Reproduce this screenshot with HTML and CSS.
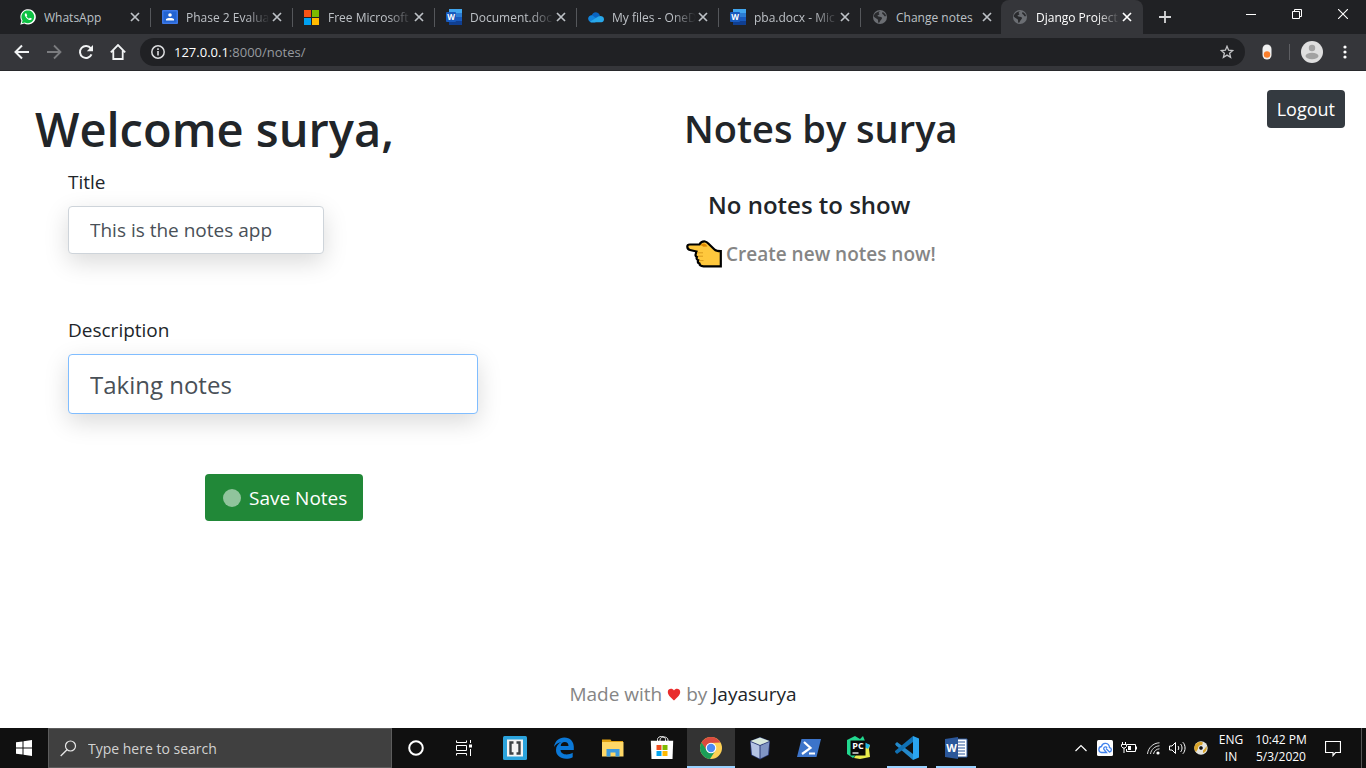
FILE: index.html
```
<!DOCTYPE html>
<html lang="en">
<head>
<meta charset="utf-8">
<title>Django Project</title>
<link rel="stylesheet" href="styles.css">
</head>
<body>
<svg class="defs" aria-hidden="true">
  <symbol id="close" viewBox="0 0 10 10"><path d="M1 1l8 8M9 1l-8 8" stroke="currentColor" stroke-width="1.7" fill="none"/></symbol>
  <symbol id="word" viewBox="0 0 16 16"><path d="M3 0h13v4H3z" fill="#41a5ee"/><path d="M3 4h13v4H3z" fill="#2b7cd3"/><path d="M3 8h13v4H3z" fill="#185abd"/><path d="M3 12h13v4H3z" fill="#103f91"/><rect y="3" width="10" height="10" rx="1" fill="#185abd"/><text x="5" y="11" text-anchor="middle" font-size="8" font-weight="700" fill="#fff">W</text></symbol>
  <symbol id="globe" viewBox="0 0 16 16"><circle cx="8" cy="8" r="7" fill="#6b6e73"/><path d="M8.500 2.500C6.500 3 6 4.200 7.500 5c-.3 1.300-2 .8-2 2 1.200 1 3.500.3 4.500 1.700.3 1.600-1.500 2-1.800 3.300L7 14c-1.300-.5-.8-2-1-3.200C5 9.500 3 9.300 1.700 7.500 2 5 4.500 2.300 8.500 2.500zM10.500 3c2 .8 3.300 2.300 3.500 4-1 .6-1.700.3-2-.6-.3-1-1.600-1-1.900-1.900z" fill="#292a2d"/></symbol>
</svg>

<header class="browser">
  <nav class="tabs">
    <div class="tab">
      <svg class="fav" viewBox="0 0 16 16"><path d="M.3 15.700l1.100-4A7.700 7.700 0 1 1 4.300 14.600z" fill="#fff"/><path d="M1.800 14.200l.8-2.700A6.400 6.400 0 1 1 4.700 13.400z" fill="#0ec143"/><path d="M5.500 4.300c-1 .8-1 2 .2 3.700 1.300 2 3.200 3.200 4.600 3.100.9-.1 1.500-.7 1.500-1.500L9.900 8.700l-.9 1C8 9.300 7 8.300 6.500 7.300l.7-.9-.8-2z" fill="#fff"/></svg>
      <a class="title" href="#">WhatsApp</a><button class="x" aria-label="Close tab"><svg><use href="#close"/></svg></button>
    </div>
    <div class="tab">
      <svg class="fav" viewBox="0 0 16 16"><rect y="1" width="16" height="14" rx="1" fill="#3d78e8"/><rect x="1.500" y="2.500" width="13" height="11" fill="#2364d2"/><circle cx="8" cy="6" r="1.800" fill="#fff"/><path d="M4 11.500V10c1-1.500 7-1.500 8 0v1.500z" fill="#fff"/></svg>
      <a class="title" href="#">Phase 2 Evalua</a><button class="x" aria-label="Close tab"><svg><use href="#close"/></svg></button>
    </div>
    <div class="tab">
      <svg class="fav" viewBox="0 0 16 16"><path d="M0 1h7v7H0z" fill="#f65314"/><path d="M8 1h7v7H8z" fill="#7cbb00"/><path d="M0 9h7v7H0z" fill="#00a1f1"/><path d="M8 9h7v7H8z" fill="#ffbb00"/></svg>
      <a class="title" href="#">Free Microsoft</a><button class="x" aria-label="Close tab"><svg><use href="#close"/></svg></button>
    </div>
    <div class="tab">
      <svg class="fav"><use href="#word"/></svg>
      <a class="title" href="#">Document.doc</a><button class="x" aria-label="Close tab"><svg><use href="#close"/></svg></button>
    </div>
    <div class="tab">
      <svg class="fav" viewBox="0 0 16 16"><path d="M3.500 7C4.500 3 9.500 1.500 12 6.500l-5 5z" fill="#0a64c0"/><path d="M1 12C-1 9 1 6 4 6.200L11 11l-4 2.500H3z" fill="#1284dc"/><path d="M2 12.700L9 8.200c3-2.200 7-1 7 2 0 2-1.200 3-2.500 3.100H4c-.8 0-1.500-.2-2-.600z" fill="#28a8ea"/></svg>
      <a class="title" href="#">My files - OneD</a><button class="x" aria-label="Close tab"><svg><use href="#close"/></svg></button>
    </div>
    <div class="tab">
      <svg class="fav"><use href="#word"/></svg>
      <a class="title" href="#">pba.docx - Mic</a><button class="x" aria-label="Close tab"><svg><use href="#close"/></svg></button>
    </div>
    <div class="tab last">
      <svg class="fav"><use href="#globe"/></svg>
      <a class="title plain" href="#">Change notes</a><button class="x" aria-label="Close tab"><svg><use href="#close"/></svg></button>
    </div>
    <div class="tab active">
      <svg class="fav"><use href="#globe"/></svg>
      <a class="title" href="#">Django Project</a><button class="x" aria-label="Close tab"><svg><use href="#close"/></svg></button>
    </div>
    <button class="new" aria-label="New tab"><svg width="12" height="12" viewBox="0 0 12 12"><path d="M6 0v12M0 6h12" stroke="#d5d6d8" stroke-width="1.800"/></svg></button>
    <div class="window">
      <button aria-label="Minimise"><svg width="10" height="10" viewBox="0 0 10 10"><path d="M0 5.500h10" stroke="#fff"/></svg></button>
      <button aria-label="Restore"><svg width="10" height="10" viewBox="0 0 10 10"><path d="M.5 2.500h7v7h-7zM2.500 2.500v-2h7v7h-2" stroke="#fff" fill="none"/></svg></button>
      <button aria-label="Close"><svg width="10" height="10" viewBox="0 0 10 10"><path d="M0 0l10 10M10 0L0 10" stroke="#fff" stroke-width="1.100"/></svg></button>
    </div>
  </nav>
  <div class="toolbar">
    <button aria-label="Back"><svg viewBox="0 0 16 16"><path d="M15 8H2M8 1.500L1.500 8 8 14.500" stroke="#f1f3f4" stroke-width="2" fill="none"/></svg></button>
    <button aria-label="Forward"><svg viewBox="0 0 16 16"><path d="M1 8h13M8 1.500L14.500 8 8 14.500" stroke="#7b7c7f" stroke-width="1.800" fill="none"/></svg></button>
    <button aria-label="Reload"><svg viewBox="0 0 16 16"><path d="M13.500 10.300A6 6 0 1 1 12.800 4.400" stroke="#f1f3f4" stroke-width="2" fill="none"/><path d="M15 1v6.200H8.800z" fill="#f1f3f4"/></svg></button>
    <button aria-label="Home"><svg viewBox="0 0 16 16"><path d="M.8 8.300L8 1l7.200 7.300M3.300 6.500V15h9.400V6.500" stroke="#f1f3f4" stroke-width="1.800" fill="none"/></svg></button>
    <div class="address">
      <svg class="info" viewBox="0 0 14 14"><circle cx="7" cy="7" r="6.200" stroke="#dcdddf" stroke-width="1.500" fill="none"/><path d="M7 6v4.500M7 3.300v1.600" stroke="#dcdddf" stroke-width="1.600"/></svg>
      <div class="url" role="textbox" aria-label="Address" contenteditable="true" spellcheck="false"><b>127.0.0.1</b>:8000/notes/</div>
      <button aria-label="Bookmark"><svg class="star" viewBox="0 0 14 14"><path d="M7 1.300l1.600 3.900 4.200.3-3.200 2.700 1 4.100L7 10.100l-3.600 2.200 1-4.100L1.200 5.500l4.200-.3z" stroke="#c4c5c7" stroke-width="1.300" fill="none"/></svg></button>
    </div>
    <button class="ext" aria-label="Extension"><svg width="10" height="16" viewBox="0 0 10 16"><rect x=".5" y=".5" width="9" height="15" rx="4.500" fill="#f0f0f0"/><circle cx="5" cy="10.500" r="3.200" fill="#f97e2c"/></svg></button>
    <span class="bar"></span>
    <button class="me" aria-label="Profile"><svg viewBox="0 0 22 22"><circle cx="11" cy="11" r="11" fill="#dfdfdf"/><circle cx="11" cy="7" r="3.200" fill="#a2a2a2"/><ellipse cx="11" cy="15" rx="6.500" ry="3.300" fill="#a2a2a2"/></svg></button>
    <button class="more" aria-label="Menu"><svg width="4" height="14" viewBox="0 0 4 14"><circle cx="2" cy="2" r="1.600" fill="#fff"/><circle cx="2" cy="7" r="1.600" fill="#fff"/><circle cx="2" cy="12" r="1.600" fill="#fff"/></svg></button>
  </div>
</header>

<main class="page">
  <div class="columns">
    <section class="editor">
      <h1>Welcome surya,</h1>
      <form>
        <label for="title">Title</label>
        <input id="title" type="text" value="This is the notes app">
        <label for="desc">Description</label>
        <input id="desc" type="text" value="Taking notes">
        <button class="save" type="button"><span class="dot"></span>Save Notes</button>
      </form>
    </section>
    <section class="notes">
      <div>
        <h2>Notes by surya</h2>
        <h3>No notes to show</h3>
        <p class="create"><svg width="36" height="28" viewBox="0 0 36 28"><path d="M1.300 6.500C1.300 5 2.300 4.500 3.800 4.500H13.500C14.500 2.500 16.500 1.300 19 1.500c1.500.2 2.300 1 3.300 2l6.200 6c1.200 1.200 2.500 1.700 6.300 1.700V26.300H17.500c-2.500 0-4-.7-4-2.700-1.700-.7-2-1.800-1.300-3.300-1.500-.8-2-2-1.300-3.300-1.200-.6-1.600-1.500-1.300-2.500L10.500 11.500 4 10C2.300 9.600 1.300 8.500 1.300 6.500z" fill="#ffc83d" stroke="#000" stroke-width="2.200"/><path d="M14.500 5c1.500-1.700 4-2 5.500-.5l1.500 2-4 .3z" fill="#e08a00"/><path d="M11 12.800h6M12 16.200h5M13.500 20.600h4" stroke="#d99a1d"/></svg><a href="#">Create new notes now!</a></p>
      </div>
      <button class="logout">Logout</button>
    </section>
  </div>
  <footer>Made with <svg width="14" height="13" viewBox="0 0 14 13"><path d="M7 12.500C5 10 .8 7.500.8 3.900.8.200 5.500-.5 7 2.500 8.500-.5 13.200.2 13.200 3.900 13.200 7.500 9 10 7 12.500z" fill="#e92c2c"/></svg> by <a href="#">Jayasurya</a></footer>
</main>

<div class="taskbar">
  <button class="start" aria-label="Start"><svg width="16" height="16" viewBox="0 0 16 16"><path d="M0 2.300L6.500 1.400V7.500H0zM7.500 1.200L16 0v7.500H7.500zM0 8.500h6.500v6.100L0 13.700zM7.500 8.500H16V16l-8.500-1.200z" fill="#fff"/></svg></button>
  <label class="search"><svg width="17" height="17" viewBox="0 0 17 17"><circle cx="10.500" cy="6" r="5" stroke="#e8e8e8" stroke-width="1.200" fill="none"/><path d="M7 9.700L.7 16" stroke="#e8e8e8" stroke-width="1.300"/></svg><input type="text" placeholder="Type here to search" aria-label="Type here to search"></label>
  <button aria-label="Cortana"><svg width="18" height="18" viewBox="0 0 18 18"><circle cx="9" cy="9" r="6.800" stroke="#fff" stroke-width="2" fill="none"/></svg></button>
  <button aria-label="Task view"><svg width="16" height="16" viewBox="0 0 16 16"><path d="M.5.500v2h10v-2M.5 15.500v-2h10v2M.5 5.500h10v5H.5zM14.500 0v3M14.500 9v7" stroke="#fff" fill="none"/><path d="M13 4.500h3v3h-3z" fill="#fff"/></svg></button>
  <div class="apps">
    <button aria-label="Brackets"><svg viewBox="0 0 24 24"><rect width="24" height="24" rx="1.500" fill="#2ba3dc"/><path d="M4 3.500h16v17H4z" fill="#f4f4f4"/><path d="M10.500 6.500h-3v11h3M13.500 6.500h3v11h-3" stroke="#3c4144" stroke-width="2.400" fill="none"/></svg></button>
    <button aria-label="Edge"><svg viewBox="0 0 24 24"><path d="M2 11C3 5 7 1.500 12.300 1.500c6 0 9.500 4.300 9.500 9.200V14H8.500c.2 3 3 4.400 6 4.400 2.400 0 4.400-.6 6.200-1.700v4.500c-2 1-4.200 1.500-6.700 1.500-5.700 0-10-3.300-10-8.700 0-3.800 2.200-6.500 5.500-8C6 6.500 3.500 8.500 2 11zM8.700 10h7.800c0-2.500-1.400-4-3.700-4-2.300 0-3.900 1.600-4.100 4z" fill="#0b78d7"/></svg></button>
    <button aria-label="File Explorer"><svg viewBox="0 0 24 24"><path d="M1 3.500h8.500l1 1.500H22v5H1z" fill="#e0a010"/><path d="M1 6h21.500v14.500H1z" fill="#ffd867"/><path d="M5.500 20.500V13h13v7.500h-4v-4h-5v4z" fill="#3d9be0"/></svg></button>
    <button aria-label="Store"><svg viewBox="0 0 24 24"><path d="M7.500 6V3.500C7.500-.5 15.500-.5 15.500 3.500V6M10 6V4c0-4 8-4 8 0v2" stroke="#eee" fill="none"/><path d="M.8 4.800h22.400L22.500 23h-21z" fill="#fff"/><path d="M6.500 9h5v5h-5z" fill="#f04e1f"/><path d="M12.500 9h5v5h-5z" fill="#7fba00"/><path d="M6.500 15h5v5h-5z" fill="#00a4ef"/><path d="M12.500 15h5v5h-5z" fill="#ffb900"/></svg></button>
    <button class="current" aria-label="Chrome"><svg viewBox="0 0 24 24"><circle cx="12" cy="12" r="11" fill="#fdd054"/><path d="M2.500 6.500A11 11 0 0 1 21.500 6.500L12 7 7.500 15z" fill="#db4b3f"/><path d="M2.500 6.500A11 11 0 0 0 11 23l5.500-8.500L8 14.500z" fill="#1b9e58"/><circle cx="12" cy="12" r="5.300" fill="#fff"/><circle cx="12" cy="12" r="4.200" fill="#4c8bf5"/></svg></button>
    <button aria-label="VirtualBox"><svg viewBox="0 0 24 24"><path d="M12 1l10 4-1 14-9 4.500L3 19 2 5z" fill="#2d3b77"/><path d="M12 1.500L21.500 5 12 9 2.500 5z" fill="#d9e9dd"/><path d="M2.700 6L11.500 9.700V22.500L4 18.700z" fill="#b4c3e4"/><path d="M21.300 6L12.500 9.700V22.500L20 18.700z" fill="#8095c4"/></svg></button>
    <button aria-label="PowerShell"><svg viewBox="0 0 24 24"><path d="M4.500 3H24l-4.500 18H0z" fill="#3c74ca"/><path d="M7 6l6.500 6L5 18M12 17.500h6" stroke="#fff" stroke-width="2.200" fill="none"/></svg></button>
    <button aria-label="PyCharm"><svg viewBox="0 0 24 24"><path d="M1 4l8-4 5 3 3-3 2 5-3 8-9 9-6-4z" fill="#22d88f"/><path d="M18 7l6 2-1 4 1 8-10 2-6-1z" fill="#e9ec4d"/><path d="M18 6l6 3-2 4-4-2z" fill="#20b7e8"/><path d="M4.500 4.500h15v15h-15z" fill="#080808"/><text x="12" y="12.500" font-size="9" font-weight="700" text-anchor="middle" fill="#fff">PC</text><path d="M6.500 17h6" stroke="#fff" stroke-width="1.300"/></svg></button>
    <button class="open" aria-label="Visual Studio Code"><svg viewBox="0 0 24 24"><path d="M0 8l2-2 16 12v6L1 9.500z" fill="#2489ca"/><path d="M0 16l2 2L18 6V0L0 15z" fill="#1070b3"/><path d="M18 0l6 2.500v19L18 24z" fill="#2aa4ef"/></svg></button>
    <button class="open" aria-label="Word"><svg viewBox="0 0 24 24"><path d="M13 3h10v18H13z" fill="#fff" stroke="#2b579a"/><path d="M14 6h7M14 9h7M14 12h7M14 15h7M14 18h7" stroke="#2b579a" stroke-width="1.200"/><path d="M1 3l13-2v22L1 21z" fill="#2b579a"/><text x="7.500" y="16" font-size="11" font-weight="700" text-anchor="middle" fill="#fff">W</text></svg></button>
  </div>
  <div class="tray">
    <button aria-label="Show hidden icons"><svg width="12" height="8" viewBox="0 0 12 8"><path d="M.5 7L6 1.500 11.500 7" stroke="#fff" stroke-width="1.200" fill="none"/></svg></button>
    <button aria-label="Cloud sync"><svg width="16" height="16" viewBox="0 0 16 16"><rect width="16" height="16" rx="1.500" fill="#fff"/><path d="M9 8.500l3.500 3.500c2.500-.3 2.500-4 0-4.300C12.200 2.500 5.500 2 4.500 6.500 1 6.800 1 12.200 4.500 12.500h5l-2-2.500a1.700 1.700 0 1 1 2.500-2" stroke="#4283ee" stroke-width="1.300" fill="none"/></svg></button>
    <button aria-label="Battery"><svg width="16" height="12" viewBox="0 0 16 12"><path d="M6 2.500h8.500v7h-9V7M15.500 4.500v3M1.500 0v2M4.500 0v2M.5 2.500h5v2L4 6H2L.5 4.500zM3 6v5" stroke="#fff" fill="none"/><path d="M7 4h3v4H7z" fill="#fff"/></svg></button>
    <button aria-label="Wi-Fi"><svg width="13" height="13" viewBox="0 0 13 13"><path d="M.5 12C1 6 6 1 12.500.8M3.500 12C4 7.500 8 4 12.500 3.800M6.500 12C7 9 9.500 7 12.500 6.800" stroke="#ddd" fill="none"/><circle cx="11" cy="11" r="1.600" fill="#fff"/></svg></button>
    <button aria-label="Volume"><svg width="17" height="14" viewBox="0 0 17 14"><path d="M.5 5H3l3.500-3.500v11L3 9H.5zM9 5c1 1 1 3 0 4M11.500 3c2 2 2 6 0 8M13.800 1.200c3 3 3 8.600 0 11.600" stroke="#fff" fill="none"/></svg></button>
    <button aria-label="Disc"><svg width="14" height="14" viewBox="0 0 14 14"><circle cx="7" cy="7" r="6.700" fill="#e4e4de"/><path d="M2 11A6 6 0 0 1 9 1.500l-1 2.500L4.500 7zM12.500 5A6 6 0 0 1 9 12l0-2.500 2-2z" fill="#d9a429"/><circle cx="7" cy="7" r="2.400" fill="#111" stroke="#fff"/></svg></button>
    <button class="lang">ENG<br>IN</button>
    <button class="clock">10:42 PM<br>5/3/2020</button>
    <button class="alerts" aria-label="Notifications"><svg width="16" height="17" viewBox="0 0 16 17"><path d="M.5 1.500h15v11h-5L8 15.500V12.500H.5z" stroke="#fff" stroke-width="1.200" fill="none"/></svg></button>
    <span class="peek"></span>
  </div>
</div>
</body>
</html>
```
FILE: styles.css
```
* { box-sizing: border-box; }
body {
  margin: 0;
  min-height: 100vh;
  display: flex;
  flex-direction: column;
  font-family: "Open Sans", "Noto Sans", sans-serif;
  color: #212529;
  background: #fff;
}
button { border: 0; padding: 0; background: none; font: inherit; color: inherit; display: flex; align-items: center; justify-content: center; flex: none; }
svg { flex: none; display: block; }
a { color: inherit; text-decoration: none; }
.defs { display: none; }

/* browser frame */
.tabs { display: flex; height: 34px; padding-left: 9px; background: #202124; font-size: 12px; color: #bdc1c6; }
.tab { position: relative; flex: 0 1 142px; min-width: 0; display: flex; align-items: center; padding: 0 11px; }
.tab::after { content: ""; position: absolute; right: 0; top: 8px; width: 1px; height: 19px; background: #55575b; }
.tab.last::after, .tab.active::after { display: none; }
.tab.active { background: #35363a; border-radius: 8px 8px 0 0; color: #fff; margin-left: -2px; }
.fav { width: 16px; height: 16px; margin-right: 8px; }
.title { flex: 1; min-width: 0; overflow: hidden; white-space: nowrap; margin-right: 2px; mask-image: linear-gradient(90deg, #000 72%, transparent); }
.tab:first-child .title, .title.plain { mask-image: none; }
.x svg { width: 10px; height: 10px; }
.new { width: 44px; }
.window { margin-left: auto; display: flex; height: 28px; }
.window button { width: 46px; }
.toolbar { display: flex; align-items: center; height: 37px; padding: 0 10px 0 6px; background: #35363a; border-bottom: 1px solid #28292c; }
.toolbar > button { width: 32px; }
.toolbar > button > svg:not([width]) { width: 16px; height: 16px; }
.address { flex: 1; min-width: 0; display: flex; align-items: center; height: 28px; margin-left: 6px; padding: 0 11px; border-radius: 14px; background: #202124; }
.info { width: 14px; height: 14px; margin-right: 9px; }
.url { flex: 1; font-size: 13px; color: #969a9f; outline: 0; white-space: nowrap; }
.url b { font-weight: 400; color: #fff; }
.star { width: 14px; height: 14px; }
.toolbar > .ext { width: 44px; }
.bar { width: 1px; height: 16px; background: #5d5e62; }
.toolbar > .me { width: 44px; }
.toolbar > .me > svg:not([width]) { width: 22px; height: 22px; }
.toolbar > .more { width: 22px; }

/* notes page */
.page { flex: 1; display: flex; flex-direction: column; font-size: 19px; }
.columns { display: grid; grid-template-columns: 1fr 1fr; }
h1, h2, h3, p { margin: 0; }
.editor { padding: 28px 0 0 35px; }
h1 { font-size: 47px; line-height: 60px; font-weight: 600; }
form { display: flex; flex-direction: column; align-items: flex-start; padding: 8px 0 0 33px; }
form label { line-height: 30px; margin-bottom: 9px; }
form input { font: inherit; color: #495057; border: 1px solid #ced4da; border-radius: 4px; background: #fff; outline: 0; padding: 0 21px; box-shadow: 0 8px 24px rgba(0,0,0,.15); }
#title { width: 256px; height: 48px; margin-bottom: 61px; }
#desc { width: 410px; height: 60px; font-size: 24px; border-color: #80bdff; margin-bottom: 60px; }
.save { height: 47px; padding: 0 16px 0 18px; margin-left: 137px; border-radius: 4px; background: #218838; color: #fff; }
.dot { width: 18px; height: 18px; margin-right: 8px; border-radius: 50%; background: #90c49c; }
.notes { display: flex; align-items: flex-start; justify-content: space-between; padding: 19px 21px 0 1px; }
h2 { font-size: 38px; line-height: 48px; font-weight: 600; padding-top: 14px; }
h3 { font-size: 24px; line-height: 30px; font-weight: 600; margin: 38px 0 0 24px; }
.create { display: flex; align-items: center; gap: 4px; margin: 20px 0 0 2px; color: #858585; line-height: 28px; }
.create a { font-weight: 600; }
.logout { height: 38px; padding: 0 10px; border-radius: 4px; background: #343a40; color: #fff; font-size: 18px; }
footer { margin-top: auto; padding-bottom: 20px; line-height: 28px; text-align: center; color: #858585; }
footer svg { display: inline-block; }
footer a { color: #212529; }

/* desktop taskbar */
.taskbar { display: flex; height: 40px; background: #101010; color: #fff; font-size: 12px; }
.taskbar > button { width: 48px; }
.search { display: flex; align-items: center; flex: 0 1 344px; min-width: 0; padding: 0 11px; border: 1px solid #5c5c5c; background: #404040; }
.search input { flex: 1; min-width: 0; margin-left: 11px; padding: 0; border: 0; outline: 0; background: none; color: #fff; font: inherit; font-size: 14px; }
.search input::placeholder { color: #d2d2d2; opacity: 1; }
.apps { display: flex; gap: 1px; margin-left: 3px; }
.apps button { width: 48px; position: relative; }
.apps svg { width: 24px; height: 24px; }
.apps .current { background: #333; }
.current::after, .open::after { content: ""; position: absolute; left: 4px; right: 4px; bottom: 0; height: 2px; background: #99d1ff; }
.current::after { left: 0; right: 0; }
.tray { display: flex; margin-left: auto; }
.tray button { width: 24px; line-height: 17px; }
.tray .lang { width: 36px; }
.tray .clock { width: 64px; }
.tray .alerts { width: 40px; }
.peek { width: 5px; margin-left: 8px; border-left: 1px solid #555; }
```
